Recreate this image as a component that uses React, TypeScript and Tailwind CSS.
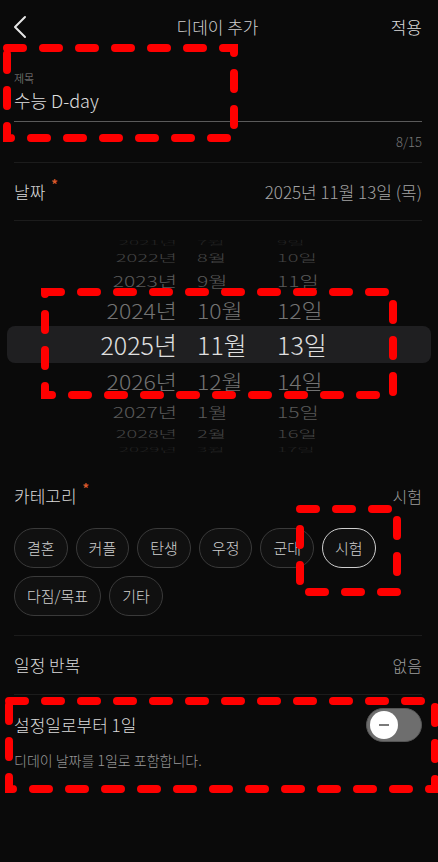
import { useState } from 'react'

const font = { fontFamily: '"Noto Sans CJK KR", "Noto Sans", sans-serif' }

interface WheelRow {
  year: string
  month: string
  day: string
  h: string
  size: string
  color: string
  scale: string
}

const wheelRows: WheelRow[] = [
  { year: '2021년', month: '7월', day: '9일', h: 'h-[12px]', size: 'text-[19px]', color: 'text-[#222]', scale: 'scale-y-[0.3]' },
  { year: '2022년', month: '8월', day: '10일', h: 'h-[20px]', size: 'text-[20px]', color: 'text-[#444]', scale: 'scale-y-[0.5]' },
  { year: '2023년', month: '9월', day: '11일', h: 'h-[26px]', size: 'text-[21px]', color: 'text-[#5a5a5a]', scale: 'scale-y-[0.68]' },
  { year: '2024년', month: '10월', day: '12일', h: 'h-[32px]', size: 'text-[23px]', color: 'text-[#737373]', scale: 'scale-y-[0.88]' },
  { year: '2025년', month: '11월', day: '13일', h: 'h-[37px]', size: 'text-[25px]', color: 'text-[#e0e0e0]', scale: 'scale-y-100' },
  { year: '2026년', month: '12월', day: '14일', h: 'h-[36px]', size: 'text-[23px]', color: 'text-[#737373]', scale: 'scale-y-[0.88]' },
  { year: '2027년', month: '1월', day: '15일', h: 'h-[26px]', size: 'text-[21px]', color: 'text-[#5a5a5a]', scale: 'scale-y-[0.68]' },
  { year: '2028년', month: '2월', day: '16일', h: 'h-[18px]', size: 'text-[20px]', color: 'text-[#444]', scale: 'scale-y-[0.5]' },
  { year: '2029년', month: '3월', day: '17일', h: 'h-[12px]', size: 'text-[19px]', color: 'text-[#222]', scale: 'scale-y-[0.3]' },
]

const categories = ['결혼', '커플', '탄생', '우정', '군대', '시험', '다짐/목표', '기타']

export default function App() {
  const [selected, setSelected] = useState('시험')
  const [inclusive, setInclusive] = useState(false)

  return (
    <div className="relative w-[438px] min-h-[862px] overflow-hidden bg-[#0a0a0a] font-light" style={font}>
      {/* Header */}
      <div className="flex items-center h-[54px] pl-[13px] pr-[16px]">
        <div className="flex-1">
          <svg width="14" height="24" viewBox="0 0 14 24">
            <polyline points="12,2 2,12 12,22" fill="none" stroke="#e6e6e6" strokeWidth="2" strokeLinecap="round" strokeLinejoin="round" />
          </svg>
        </div>
        <h1 className="text-[17px] text-[#cfcfcf]">디데이 추가</h1>
        <div className="flex-1 flex justify-end">
          <button className="text-[17px] text-[#dcdcdc]">적용</button>
        </div>
      </div>

      <div className="pl-[14px] pr-[16px]">
        {/* Title */}
        <div className="pt-[16px]">
          <p className="h-[16px] leading-[16px] text-[11px] text-[#8c8c8c]">제목</p>
          <div className="h-[36px] border-b border-[#5a5a5a]">
            <p className="leading-[28px] text-[18px] text-[#e0e0e0]">수능 D-day</p>
          </div>
          <div className="flex items-center justify-end h-[40px] text-[13px] text-[#7a7a7a]">8/15</div>
        </div>
        <div className="h-px bg-[#1c1c1c]" />

        {/* Date */}
        <div className="flex items-center justify-between h-[57px]">
          <div className="flex items-start text-[17px] text-[#dadada]">
            날짜
            <span className="ml-[6px] -mt-[2px] text-[13px] font-bold leading-none text-[#d9582b]">*</span>
          </div>
          <span className="text-[17px] text-[#a3a3a3]">2025년 11월 13일 (목)</span>
        </div>
        <div className="h-px bg-[#1c1c1c]" />
      </div>

      {/* Wheel picker */}
      <div className="pt-[15px] px-[7px]">
        {wheelRows.map((r) => (
          <div
            key={r.year}
            className={`flex items-center ${r.h} ${r.year === '2025년' ? 'bg-[#1f1f21] rounded-[8px]' : ''}`}
          >
            <div className={`flex w-full items-center ${r.scale} ${r.size} ${r.color} leading-none`}>
              <span className="w-[170px] text-right">{r.year}</span>
              <span className="w-[100px] pl-[20px]">{r.month}</span>
              <span className="flex-1">{r.day}</span>
            </div>
          </div>
        ))}
      </div>

      <div className="pl-[14px] pr-[16px]">
        {/* Category */}
        <div className="pt-[21px] pb-[19px]">
          <div className="flex items-center justify-between h-[40px]">
            <div className="flex items-start text-[17px] text-[#dadada]">
              카테고리
              <span className="ml-[6px] -mt-[2px] text-[13px] font-bold leading-none text-[#d9582b]">*</span>
            </div>
            <span className="text-[16px] text-[#9c9c9c]">{selected}</span>
          </div>
          <div className="flex flex-wrap gap-[8px] mt-[12px] pr-[40px]">
            {categories.map((c) => (
              <button
                key={c}
                onClick={() => setSelected(c)}
                className={`h-[40px] px-[12px] rounded-full bg-[#101010] text-[15px] text-[#d0d0d0] border ${
                  selected === c ? 'border-[#cfcfcf]' : 'border-[#3a3a3a]'
                }`}
              >
                {c}
              </button>
            ))}
          </div>
        </div>
        <div className="h-px bg-[#1c1c1c]" />

        {/* Repeat */}
        <div className="flex items-center justify-between h-[58px]">
          <span className="text-[17px] text-[#dadada]">일정 반복</span>
          <span className="text-[16px] text-[#9c9c9c]">없음</span>
        </div>
        <div className="h-px bg-[#1c1c1c]" />

        {/* Inclusive toggle */}
        <div className="pt-[13px]">
          <div className="flex items-center justify-between h-[34px]">
            <span className="text-[17px] text-[#dadada]">설정일로부터 1일</span>
            <button
              onClick={() => setInclusive(!inclusive)}
              className={`flex items-center w-[56px] h-[34px] rounded-full p-[3px] border border-[#555] ${
                inclusive ? 'bg-[#3b82f6] justify-end' : 'bg-[#6e6e6e] justify-start'
              }`}
            >
              <span className="flex items-center justify-center w-[28px] h-[28px] rounded-full bg-white">
                <span className="w-[10px] h-[2px] bg-[#7a7a7a]" />
              </span>
            </button>
          </div>
          <p className="mt-[9px] text-[14px] leading-[18px] text-[#999]">디데이 날짜를 1일로 포함합니다.</p>
        </div>
      </div>

      {/* Annotation marks */}
      <svg className="absolute inset-0 pointer-events-none" width="438" height="862">
        <g fill="none" stroke="#ff0000" strokeWidth="8" strokeLinecap="round" strokeDasharray="16 20">
          <rect x="7" y="48" width="227" height="90" />
          <rect x="45" y="292" width="348" height="103" />
          <rect x="300" y="509" width="97" height="83" />
          <rect x="9" y="701" width="426" height="88" />
        </g>
      </svg>
    </div>
  )
}
